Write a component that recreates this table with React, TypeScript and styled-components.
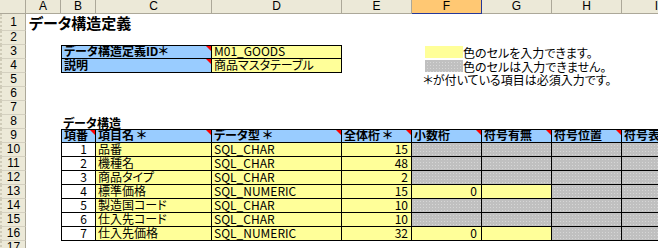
import React from "react";
import styled, { createGlobalStyle, css } from "styled-components";

// row header + columns A..I
const COLS = "26px 35px 35px 116px 130px 70px 70px 70px 70px 70px";

const GlobalStyle = createGlobalStyle`
  html, body { margin: 0; padding: 0; background: #fff; }
  body { font-family: "Noto Sans CJK JP", "Liberation Sans", sans-serif; }
`;

const Sheet = styled.div`
  width: 658px;
  height: 248px;
  overflow: hidden;
  background: #fff;
  font-family: "Noto Sans CJK JP", "Liberation Sans", sans-serif;
  font-feature-settings: "palt";
  font-size: 12px;
  color: #000;
`;

const Row = styled.div<{ $h?: number }>`
  display: grid;
  grid-template-columns: ${COLS};
  grid-template-rows: ${(p) => p.$h ?? 14}px;
  height: ${(p) => p.$h ?? 14}px;
`;

const Corner = styled.div`
  box-sizing: border-box;
  background: #ece9d8;
  border-right: 1px solid #aca899;
  border-bottom: 1px solid #aca899;
`;

const ColHead = styled.div<{ $active?: boolean }>`
  box-sizing: border-box;
  background: ${(p) => (p.$active ? "#ffc873" : "#ece9d8")};
  border-right: 1px solid ${(p) => (p.$active ? "#25399a" : "#aca899")};
  border-bottom: 1px solid ${(p) => (p.$active ? "#25399a" : "#aca899")};
  font-family: "Liberation Sans", sans-serif;
  font-size: 12px;
  line-height: 13px;
  text-align: center;
`;

const RowHead = styled.div<{ $h?: number }>`
  box-sizing: border-box;
  background: #ece9d8;
  border-right: 1px solid #aca899;
  border-bottom: 1px solid #d4d0c0;
  border-left: 2px dotted #cfcbb8;
  font-family: "Liberation Sans", sans-serif;
  font-size: 12px;
  line-height: ${(p) => (p.$h ?? 14) - 1}px;
  text-align: center;
  overflow: hidden;
`;

const Blank = styled.div<{ $span?: number }>`
  grid-column: span ${(p) => p.$span ?? 1};
`;

type Fill = "blue" | "yellow" | "white" | "gray";

const grayPattern = css`
  background-color: #c0c0c0;
  background-image: linear-gradient(to right, #c0c0c0 2px, transparent 2px),
    linear-gradient(to bottom, #c0c0c0 2px, #d6d6d6 2px);
  background-size: 3px 3px;
`;

const fillCss = (f: Fill) => {
  if (f === "gray") return grayPattern;
  if (f === "blue") return css`background: #99ccff;`;
  if (f === "yellow") return css`background: #ffff99;`;
  return css`background: #fff;`;
};

const Cell = styled.div<{
  $fill: Fill;
  $span?: number;
  $right?: boolean;
  $bold?: boolean;
  $top?: boolean;
  $left?: boolean;
  $pr?: number;
}>`
  position: relative;
  box-sizing: border-box;
  grid-column: span ${(p) => p.$span ?? 1};
  ${(p) => fillCss(p.$fill)}
  border-right: 1px solid #000;
  border-bottom: 1px solid #000;
  border-top: ${(p) => (p.$top ? "1px solid #000" : "none")};
  border-left: ${(p) => (p.$left ? "1px solid #000" : "none")};
  padding: 0 ${(p) => p.$pr ?? 2}px 0 2px;
  font-weight: ${(p) => (p.$bold ? 700 : 400)};
  text-align: ${(p) => (p.$right ? "right" : "left")};
  line-height: ${(p) => (p.$top ? 10 : 12)}px;
  white-space: nowrap;
  overflow: hidden;
`;

const Mark = styled.span`
  position: absolute;
  top: 0;
  right: 0;
  width: 0;
  height: 0;
  border-left: 5px solid transparent;
  border-top: 5px solid #ff0000;
`;

const Title = styled.div`
  grid-column: span 8;
  padding-left: 3px;
  font-size: 15px;
  font-weight: 700;
  line-height: 17px;
  white-space: nowrap;
`;

const Caption = styled.div`
  grid-column: span 7;
  padding-left: 2px;
  font-weight: 700;
  line-height: 15px;
  white-space: nowrap;
`;

const Legend = styled.div`
  grid-column: span 4;
  display: flex;
  align-items: center;
  padding-left: 13px;
  line-height: 13px;
  white-space: nowrap;
`;

const Swatch = styled.span<{ $fill: Fill }>`
  display: inline-block;
  width: 38px;
  height: 12px;
  ${(p) => fillCss(p.$fill)}
`;

const Note = styled.div`
  grid-column: span 4;
  padding-left: 11px;
  line-height: 14px;
  white-space: nowrap;
`;

const columns = ["A", "B", "C", "D", "E", "F", "G", "H", "I"];
const heads = ["項番", "項目名 ＊", "データ型 ＊", "全体桁 ＊", "小数桁", "符号有無", "符号位置", "符号表示"];

const items = [
  { no: 1, name: "品番", type: "SQL_CHAR", len: 15 },
  { no: 2, name: "機種名", type: "SQL_CHAR", len: 48 },
  { no: 3, name: "商品タイプ", type: "SQL_CHAR", len: 2 },
  { no: 4, name: "標準価格", type: "SQL_NUMERIC", len: 15, scale: 0 },
  { no: 5, name: "製造国コード", type: "SQL_CHAR", len: 10 },
  { no: 6, name: "仕入先コード", type: "SQL_CHAR", len: 10 },
  { no: 7, name: "仕入先価格", type: "SQL_NUMERIC", len: 32, scale: 0 },
];

export default function App() {
  return (
    <Sheet>
      <GlobalStyle />
      <Row>
        <Corner />
        {columns.map((c) => (
          <ColHead key={c} $active={c === "F"}>
            {c}
          </ColHead>
        ))}
      </Row>

      <Row $h={17}>
        <RowHead $h={17}>1</RowHead>
        <Title>データ構造定義</Title>
      </Row>
      <Row>
        <RowHead>2</RowHead>
      </Row>
      <Row>
        <RowHead>3</RowHead>
        <Blank />
        <Cell $fill="blue" $span={2} $bold $top $left>
          データ構造定義ID＊
          <Mark />
        </Cell>
        <Cell $fill="yellow" $top>M01_GOODS</Cell>
        <Blank />
        <Legend>
          <Swatch $fill="yellow" />
          色のセルを入力できます。
        </Legend>
      </Row>
      <Row>
        <RowHead>4</RowHead>
        <Blank />
        <Cell $fill="blue" $span={2} $bold $left>
          説明
          <Mark />
        </Cell>
        <Cell $fill="yellow">商品マスタテーブル</Cell>
        <Blank />
        <Legend>
          <Swatch $fill="gray" />
          色のセルは入力できません。
        </Legend>
      </Row>
      <Row>
        <RowHead>5</RowHead>
        <Blank $span={5} />
        <Note>＊が付いている項目は必須入力です。</Note>
      </Row>
      <Row>
        <RowHead>6</RowHead>
      </Row>
      <Row>
        <RowHead>7</RowHead>
      </Row>
      <Row>
        <RowHead>8</RowHead>
        <Blank />
        <Caption>データ構造</Caption>
      </Row>
      <Row>
        <RowHead>9</RowHead>
        <Blank />
        {heads.map((h, i) => (
          <Cell key={h} $fill="blue" $bold $top $left={i === 0}>
            {h}
            {i < 7 && <Mark />}
          </Cell>
        ))}
      </Row>
      {items.map((it, i) => {
        const numeric = it.scale !== undefined;
        return (
          <Row key={it.no}>
            <RowHead>{10 + i}</RowHead>
            <Blank />
            <Cell $fill="white" $left $right $pr={8}>
              {it.no}
            </Cell>
            <Cell $fill="yellow">{it.name}</Cell>
            <Cell $fill="yellow">{it.type}</Cell>
            <Cell $fill="yellow" $right $pr={3}>
              {it.len}
            </Cell>
            <Cell $fill={numeric ? "yellow" : "gray"} $right $pr={4}>
              {numeric ? it.scale : ""}
            </Cell>
            <Cell $fill={numeric ? "yellow" : "gray"} />
            <Cell $fill="gray" />
            <Cell $fill="gray" />
          </Row>
        );
      })}
      <Row>
        <RowHead>17</RowHead>
      </Row>
    </Sheet>
  );
}
